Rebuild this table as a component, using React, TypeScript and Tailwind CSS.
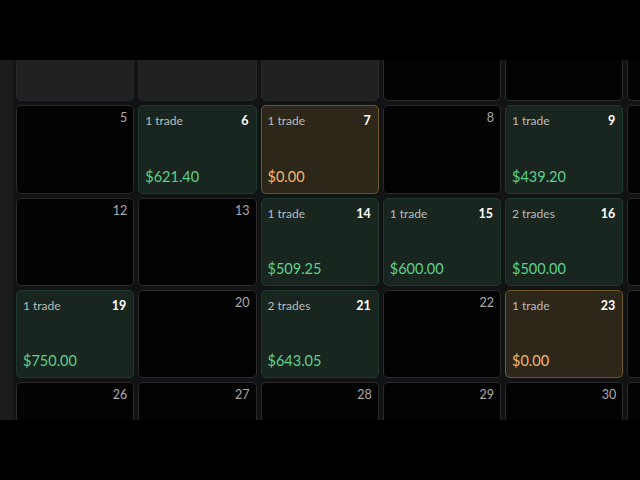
import React from 'react';

type Kind = 'out' | 'empty' | 'win' | 'flat';

interface Day {
  day?: number;
  kind: Kind;
  trades?: number;
  amount?: string;
}

const e = (day: number): Day => ({ day, kind: 'empty' });
const out: Day = { kind: 'out' };

const weeks: Day[][] = [
  [out, out, out, e(1), e(2), e(3), e(4)],
  [
    e(5),
    { day: 6, kind: 'win', trades: 1, amount: '$621.40' },
    { day: 7, kind: 'flat', trades: 1, amount: '$0.00' },
    e(8),
    { day: 9, kind: 'win', trades: 1, amount: '$439.20' },
    e(10),
    e(11),
  ],
  [
    e(12),
    e(13),
    { day: 14, kind: 'win', trades: 1, amount: '$509.25' },
    { day: 15, kind: 'win', trades: 1, amount: '$600.00' },
    { day: 16, kind: 'win', trades: 2, amount: '$500.00' },
    e(17),
    e(18),
  ],
  [
    { day: 19, kind: 'win', trades: 1, amount: '$750.00' },
    e(20),
    { day: 21, kind: 'win', trades: 2, amount: '$643.05' },
    e(22),
    { day: 23, kind: 'flat', trades: 1, amount: '$0.00' },
    e(24),
    e(25),
  ],
  [e(26), e(27), e(28), e(29), e(30), e(31), out],
];

const DayCell = ({ d, hideText }: { d: Day; hideText?: boolean }) => {
  if (d.kind === 'out') {
    return <div className="rounded-[5px] border border-[#262729] bg-[#202123]" />;
  }

  if (d.kind === 'empty') {
    return (
      <div className="flex justify-end rounded-[5px] border border-[#2a2a2c] bg-[#030303] pt-[4px] pr-[6px]">
        {!hideText && <span className="text-[12.5px] leading-4 text-[#ababab]">{d.day}</span>}
      </div>
    );
  }

  const win = d.kind === 'win';
  return (
    <div
      className={
        win
          ? 'flex flex-col justify-between rounded-[5px] border border-[#1f3a2c] bg-[#19261f] py-[7px] pr-[7px] pl-[6px] pb-[6px]'
          : 'flex flex-col justify-between rounded-[5px] border border-[#6e5822] bg-[#2c2719] py-[7px] pr-[7px] pl-[6px] pb-[6px]'
      }
    >
      <div className="flex items-center justify-between">
        <span className="text-[12px] leading-4 text-[#b8bbb9]">
          {d.trades} {d.trades === 1 ? 'trade' : 'trades'}
        </span>
        <span className="text-[12.5px] font-bold leading-4 text-white">{d.day}</span>
      </div>
      <span className={win ? 'text-[14.5px] leading-5 text-[#5dd08b]' : 'text-[14.5px] leading-5 text-[#f3b66e]'}>
        {d.amount}
      </span>
    </div>
  );
};

export default function App() {
  return (
    <div className="flex h-[480px] w-[640px] flex-col overflow-hidden bg-black" style={{ fontFamily: 'Lato, "Open Sans", sans-serif' }}>
      <div className="h-[60px] shrink-0 bg-black" />
      <div className="flex h-[360px] shrink-0 overflow-hidden bg-[#121314]">
        <div className="w-[13px] shrink-0 bg-[#1b1c1e]" />
        <div className="mt-[-47px] pl-[3px]">
          <div className="grid grid-cols-[repeat(7,118.25px)] auto-rows-[88.25px] gap-x-[4px] gap-y-[4px]">
            {weeks.map((week, w) =>
              week.map((d, i) => <DayCell key={`${w}-${i}`} d={d} hideText={w === 0} />)
            )}
          </div>
        </div>
      </div>
      <div className="h-[60px] shrink-0 bg-black" />
    </div>
  );
}
